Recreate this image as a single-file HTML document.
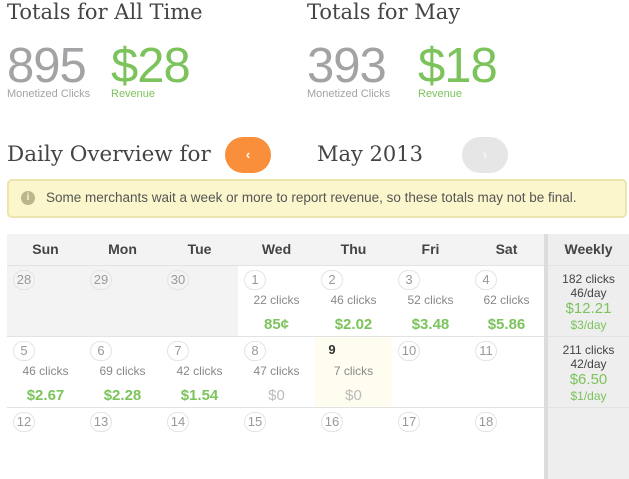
<!DOCTYPE html>
<html><head><style>
*{margin:0;padding:0;box-sizing:border-box}
body{width:629px;height:479px;overflow:hidden;background:#fff;font-family:"Liberation Sans",sans-serif;position:relative;color:#555}
.a{position:absolute}
.h{font-family:"DejaVu Serif","Liberation Serif",serif;color:#444;font-size:21px;white-space:nowrap}
.big{font-size:49px;letter-spacing:-1px;line-height:48px}
.lbl{font-size:11px}
.g{color:#7cc35c}.gr{color:#a3a3a5}
table{position:absolute;left:7px;top:234px;border-collapse:collapse;table-layout:fixed;width:622px}
td,th{width:77px;vertical-align:top;text-align:center;position:relative}
th{height:31px;background:#f3f3f3;font-weight:bold;font-size:14px;color:#444;line-height:31px}
td{height:71px;border-top:1px solid #e3e3e3}
.w{width:83px;background:#eeeeee;border-left:4px solid #dcdcdc;font-size:12px;color:#444;line-height:14px;padding-top:6px}
.n{position:absolute;left:6px;top:4px;width:22px;height:20px;border:1px solid #e4e4e4;border-radius:11px;font-size:13px;color:#999;line-height:18px;text-align:center}
.c{position:absolute;top:27px;width:100%;font-size:12px;color:#888}
.r{position:absolute;top:50px;width:100%;font-size:15px;font-weight:bold;color:#7cc35c}
.z{color:#bbb;font-weight:normal}
.gy{background:#f3f3f3}
</style></head><body>
<div class="a h" style="left:7px;top:0px">Totals for All Time</div>
<div class="a h" style="left:307px;top:0px">Totals for May</div>
<div class="a big gr" style="left:7px;top:42px">895</div>
<div class="a big g" style="left:111px;top:42px">$28</div>
<div class="a lbl gr" style="left:7px;top:88px">Monetized Clicks</div>
<div class="a lbl g" style="left:111px;top:88px">Revenue</div>
<div class="a big gr" style="left:307px;top:42px">393</div>
<div class="a big g" style="left:418px;top:42px">$18</div>
<div class="a lbl gr" style="left:307px;top:88px">Monetized Clicks</div>
<div class="a lbl g" style="left:418px;top:88px">Revenue</div>

<div class="a h" style="left:7px;top:142px;font-size:21.5px">Daily Overview for</div>
<div class="a" style="left:225px;top:137px;width:46px;height:36px;border-radius:18px;background:#f98f3a;color:#fff;text-align:center;line-height:36px;font-size:13px;font-weight:bold">‹</div>
<div class="a h" style="left:317px;top:142px">May 2013</div>
<div class="a" style="left:462px;top:137px;width:46px;height:36px;border-radius:18px;background:#e6e6e6;color:#fff;text-align:center;line-height:36px;font-size:13px">›</div>

<div class="a" style="left:7px;top:179px;width:620px;height:39px;background:#fbf6cc;border:2px solid #ebe4ac;border-radius:5px"></div>
<div class="a" style="left:21px;top:191px;width:14px;height:14px;border-radius:7px;background:#bdb58c;color:#fbf6cc;font-size:10px;font-weight:bold;text-align:center;line-height:14px">i</div>
<div class="a" style="left:46px;top:190px;font-size:13.5px;color:#555;white-space:nowrap">Some merchants wait a week or more to report revenue, so these totals may not be final.</div>

<table>
<tr><th>Sun</th><th>Mon</th><th>Tue</th><th>Wed</th><th>Thu</th><th>Fri</th><th>Sat</th><th class="w" style="padding:0;line-height:31px;font-size:14px">Weekly</th></tr>
<tr>
<td class="gy"><span class="n">28</span></td>
<td class="gy"><span class="n">29</span></td>
<td class="gy"><span class="n">30</span></td>
<td><span class="n">1</span><div class="c">22 clicks</div><div class="r">85¢</div></td>
<td><span class="n">2</span><div class="c">46 clicks</div><div class="r">$2.02</div></td>
<td><span class="n">3</span><div class="c">52 clicks</div><div class="r">$3.48</div></td>
<td><span class="n">4</span><div class="c">62 clicks</div><div class="r">$5.86</div></td>
<td class="w">182 clicks<br>46/day<br><span class="g" style="font-size:15px;line-height:18px">$12.21</span><br><span class="g">$3/day</span></td>
</tr>
<tr>
<td><span class="n">5</span><div class="c">46 clicks</div><div class="r">$2.67</div></td>
<td><span class="n">6</span><div class="c">69 clicks</div><div class="r">$2.28</div></td>
<td><span class="n">7</span><div class="c">42 clicks</div><div class="r">$1.54</div></td>
<td><span class="n">8</span><div class="c">47 clicks</div><div class="r z">$0</div></td>
<td style="background:#fffdf0"><span class="n" style="border:none;color:#333;font-weight:bold">9</span><div class="c">7 clicks</div><div class="r z">$0</div></td>
<td><span class="n">10</span></td>
<td><span class="n">11</span></td>
<td class="w">211 clicks<br>42/day<br><span class="g" style="font-size:15px;line-height:18px">$6.50</span><br><span class="g">$1/day</span></td>
</tr>
<tr>
<td><span class="n">12</span></td><td><span class="n">13</span></td><td><span class="n">14</span></td><td><span class="n">15</span></td><td><span class="n">16</span></td><td><span class="n">17</span></td><td><span class="n">18</span></td><td class="w"></td>
</tr>
</table>
</body></html>
